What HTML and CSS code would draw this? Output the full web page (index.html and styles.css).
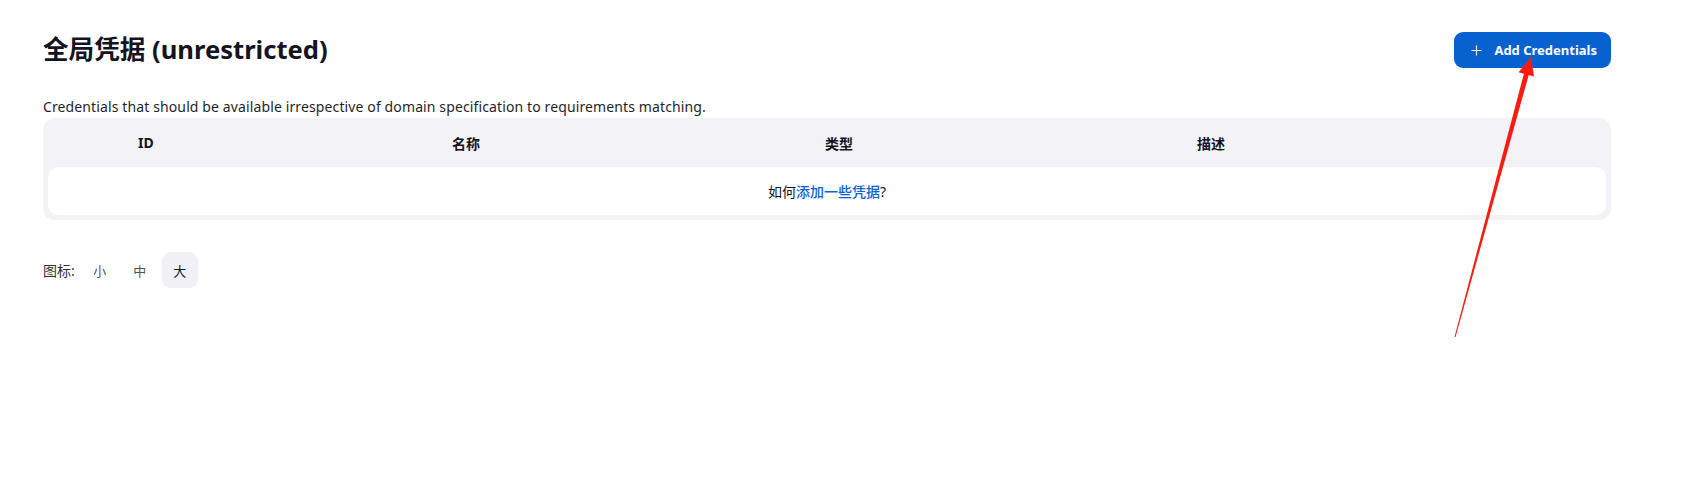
FILE: index.html
```html
<!DOCTYPE html>
<html lang="zh-CN">
<head>
  <meta charset="utf-8">
  <title>全局凭据 (unrestricted)</title>
  <link rel="stylesheet" href="styles.css">
</head>
<body>
  <main class="page">
    <header class="app-bar">
      <h1>全局凭据 (unrestricted)</h1>
      <a class="btn-primary" href="#">
        <svg class="plus" viewBox="0 0 12 12" width="11" height="11"><path d="M6 0.5v11M0.5 6h11" stroke="currentColor" stroke-width="1.2" fill="none"/></svg>
        <span>Add Credentials</span>
      </a>
    </header>

    <p class="desc">Credentials that should be available irrespective of domain specification to requirements matching.</p>

    <section class="cred-table">
      <div class="cred-head">
        <span></span>
        <span>ID</span>
        <span>名称</span>
        <span>类型</span>
        <span>描述</span>
      </div>
      <div class="cred-body">
        如何<a href="#">添加一些凭据</a>?
      </div>
    </section>

    <div class="icon-size">
      <span class="label">图标:</span>
      <button>小</button>
      <button>中</button>
      <button class="active">大</button>
    </div>
  </main>

  <svg class="annotation" width="1703" height="496" viewBox="0 0 1703 496">
    <polygon fill="#fb1a10" points="1454.5,336.9 1523.9,73.7 1518.6,72.3 1531,57 1534,76.5 1528.7,75.1 1455.5,337.1"/>
  </svg>
</body>
</html>
```

FILE: styles.css
```css
body {
  margin: 0;
  background: #fff;
  color: #14141f;
  font-family: "Noto Sans", "Noto Sans CJK SC", sans-serif;
  font-size: 14px;
}

.page {
  padding: 32px 92px 0 43px;
}

.app-bar {
  display: flex;
  justify-content: space-between;
  align-items: center;
  height: 36px;
}

h1 {
  margin: 0;
  font-size: 25.6px;
  font-weight: 700;
  line-height: 36px;
  color: #14141f;
}

.btn-primary {
  display: flex;
  align-items: center;
  gap: 12px;
  height: 36px;
  box-sizing: border-box;
  padding: 0 14px 0 17px;
  background: #0762d0;
  color: #fff;
  border-radius: 9px;
  font-size: 13px;
  font-weight: 700;
  text-decoration: none;
}

.desc {
  margin: 29px 0 1px;
  line-height: 20px;
  letter-spacing: 0.12px;
  color: #1f1f2b;
}

.cred-table {
  background: #f2f2f7;
  border-radius: 12px;
  padding: 0 5px 5px;
}

.cred-head {
  display: grid;
  grid-template-columns: 90px 314px 373px 372px 1fr;
  height: 49px;
  align-items: center;
  font-weight: 700;
}

.cred-body {
  background: #fff;
  border-radius: 10px;
  height: 48px;
  display: flex;
  align-items: center;
  justify-content: center;

  & a {
    color: #0b63cf;
    text-decoration: none;
    font-weight: 500;
  }
}

.icon-size {
  display: flex;
  align-items: center;
  gap: 4px;
  margin-top: 32px;

  & .label {
    margin-right: 3px;
    color: #333;
  }

  & button {
    width: 36px;
    height: 36px;
    border: 0;
    border-radius: 9px;
    background: none;
    font: inherit;
    font-size: 13px;
    color: #555;
    padding: 0;
  }

  & .active {
    background: #f0f0f6;
    color: #14141f;
  }
}

.annotation {
  position: absolute;
  top: 0;
  left: 0;
  pointer-events: none;
}
```
